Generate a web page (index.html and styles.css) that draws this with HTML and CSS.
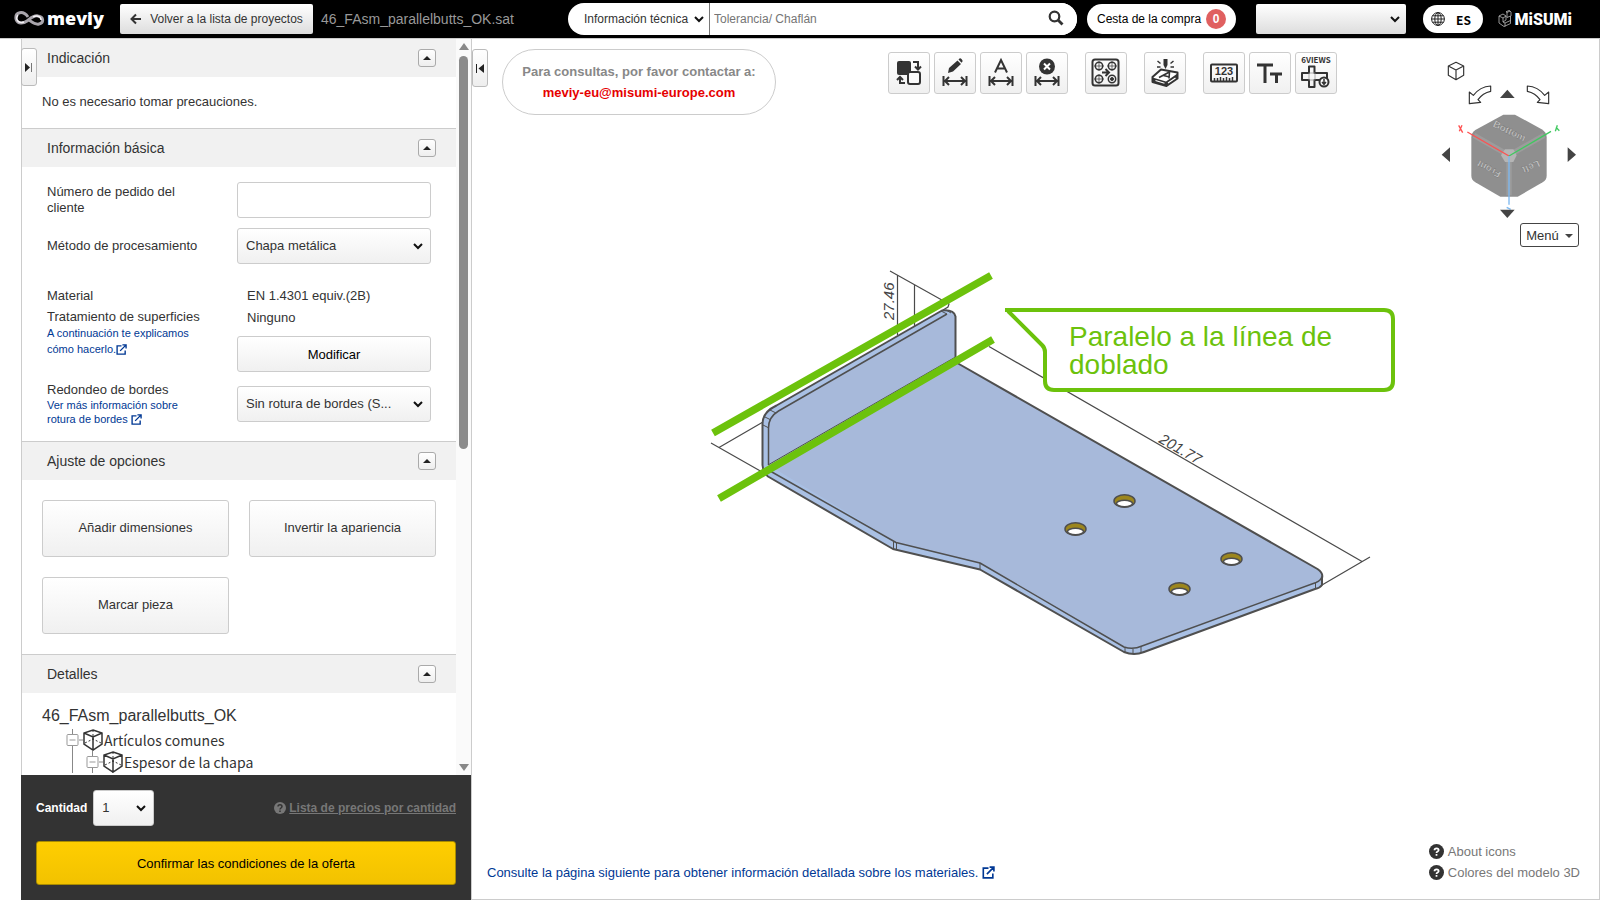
FILE: index.html
```html
<!DOCTYPE html>
<html lang="es">
  <head>
    <meta charset="utf-8" />
    <title>meviy</title>
    <meta name="viewport" content="width=device-width, initial-scale=1" />
    <link rel="stylesheet" href="styles.css">
  </head>

  <body>
    <header class="header">
      <a href="#" class="logo">
        <svg width="31" height="18" viewBox="0 0 31 18" fill="none">
          <path d="M14 7C9 0 1 2 2 9c1 5 7 5 11 2 4-3 7-6 11-5 6 1 6 7 1 8-4 1-7-2-10-4" stroke="#a9a5ac" stroke-width="3" />
          <path d="M4 5c-3 4 0 9 6 7M19 7c3-2 8-1 8 3" stroke="#f5f3f6" stroke-width="1.500" />
        </svg>
        <span>meviy</span>
      </a>
      <button type="button" class="back">
        <svg width="12" height="12" viewBox="0 0 12 12" fill="none" stroke="#333" stroke-width="2">
          <path d="M11 6H2M6 1.500L1.500 6L6 10.500" />
        </svg>
        Volver a la lista de proyectos
      </button>
      <span class="filename">46_FAsm_parallelbutts_OK.sat</span>
      <form class="search">
        <select class="search-type" aria-label="Tipo">
          <option>Información técnica</option>
        </select>
        <input type="text" class="search-text" placeholder="Tolerancia/ Chaflán" aria-label="Buscar" />
        <button type="button" class="search-btn" aria-label="Buscar">
          <svg width="16" height="16" viewBox="0 0 16 16" fill="none" stroke="#333">
            <circle cx="6.500" cy="6.500" r="4.800" stroke-width="2.200" />
            <path d="M10 10l4.500 4.500" stroke-width="2.800" />
          </svg>
        </button>
      </form>
      <a href="#" class="cart">Cesta de la compra <span class="badge">0</span></a>
      <select class="user" aria-label="Usuario">
        <option></option>
      </select>
      <button type="button" class="lang">
        <svg width="14" height="14" viewBox="0 0 14 14" fill="none" stroke="#222">
          <circle cx="7" cy="7" r="6.400" />
          <ellipse cx="7" cy="7" rx="3.200" ry="6.400" />
          <path d="M7 .5v13M.5 7h13M1.500 3.800h11M1.500 10.200h11" />
        </svg>
        ES
      </button>
      <a href="#" class="misumi">
        <svg width="14" height="18" viewBox="0 0 14 18" fill="none" stroke="#bbb" stroke-width="0.8">
          <path d="M1 6l4-2 3 2-3 2zM1 6v7l5 3.500 6.500-3V6L9 7.500V2.500L12 1l1 1v4M5 8v4l2 1 5.500-2.500M7 13v3.500M8 6v4L5 12M9 2.500l-1-.7L11 .5l1 .5" />
        </svg>
        <span>MiSUMi</span>
      </a>
    </header>

    <div class="main">
      <div class="sidebar">
        <button type="button" class="handle handle-left" aria-label="Abrir">
          <svg width="8" height="9" viewBox="0 0 8 9"><path d="M0 0l5 4.500L0 9z" fill="#222" /><path d="M6.500 0v9" stroke="#777" /></svg>
        </button>
        <div class="scroll">
          <div class="panels">
            <section>
              <h2 class="panel-title">Indicación <button type="button" class="toggle" aria-label="Plegar"></button></h2>
              <div class="notice">No es necesario tomar precauciones.</div>
            </section>
            <section>
              <h2 class="panel-title">Información básica <button type="button" class="toggle" aria-label="Plegar"></button></h2>
              <div class="basic">
                <div class="row">
                  <label for="order" class="label">Número de pedido del<br />cliente</label>
                  <input type="text" id="order" class="control" />
                </div>
                <div class="row">
                  <label for="method" class="label">Método de procesamiento</label>
                  <select id="method" class="control">
                    <option>Chapa metálica</option>
                  </select>
                </div>
                <div class="row material">
                  <div class="label">
                    Material<br />
                    Tratamiento de superficies
                    <a href="#">A continuación te explicamos<br />cómo hacerlo.<svg class="ext" viewBox="0 0 12 12"><path d="M6 2H1.200v9H10V7M4.500 7.500L10.500 1.500M7 1h4v4" /></svg></a>
                  </div>
                  <div class="value">
                    <span>EN 1.4301 equiv.(2B)</span>
                    <span>Ninguno</span>
                    <button type="button" class="control modify">Modificar</button>
                  </div>
                </div>
                <div class="row edges">
                  <div class="label">
                    <label for="edge">Redondeo de bordes</label>
                    <a href="#">Ver más información sobre<br />rotura de bordes <svg class="ext" viewBox="0 0 12 12"><path d="M6 2H1.200v9H10V7M4.500 7.500L10.500 1.500M7 1h4v4" /></svg></a>
                  </div>
                  <select id="edge" class="control">
                    <option>Sin rotura de bordes (S...</option>
                  </select>
                </div>
              </div>
            </section>
            <section>
              <h2 class="panel-title">Ajuste de opciones <button type="button" class="toggle" aria-label="Plegar"></button></h2>
              <div class="options">
                <button type="button">Añadir dimensiones</button>
                <button type="button">Invertir la apariencia</button>
                <button type="button">Marcar pieza</button>
              </div>
            </section>
            <section>
              <h2 class="panel-title">Detalles <button type="button" class="toggle" aria-label="Plegar"></button></h2>
              <div class="details">
                <div class="part-name">46_FAsm_parallelbutts_OK</div>
                <div class="tree-row">
                  <svg width="37" height="22" viewBox="0 0 37 22" fill="none">
                    <path d="M6.500 0v5M6.500 17v5M13 11h4" stroke="#888" />
                    <rect x="1" y="5.500" width="11" height="11" rx="1" stroke="#999" />
                    <path d="M3.500 11h6" stroke="#999" />
                    <path d="M27 1l9 3v11l-9 6-9-6V4zM18 4l9 4 9-4M27 8v13" stroke="#333" stroke-width="1.500" />
                    <path d="M27 1v12M19 14l8-4 8 4" stroke="#333" stroke-dasharray="2 2" />
                  </svg>
                  Artículos comunes
                </div>
                <div class="tree-row">
                  <svg width="57" height="22" viewBox="0 0 57 22" fill="none">
                    <path d="M6.500 0v22M26.500 0v5M26.500 17v5M33 11h4" stroke="#888" />
                    <rect x="21" y="5.500" width="11" height="11" rx="1" stroke="#999" />
                    <path d="M23.500 11h6M46.500 20v2" stroke="#999" />
                    <path d="M47 1l9 3v11l-9 6-9-6V4zM38 4l9 4 9-4M47 8v13" stroke="#333" stroke-width="1.500" />
                    <path d="M47 1v12M39 14l8-4 8 4" stroke="#333" stroke-dasharray="2 2" />
                  </svg>
                  Espesor de la chapa
                </div>
              </div>
            </section>
          </div>
          <div class="scrollbar">
            <div class="arrow-up"></div>
            <div class="thumb"></div>
            <div class="arrow-down"></div>
          </div>
        </div>
        <div class="order">
          <div class="order-row">
            <label for="qty">Cantidad</label>
            <select id="qty" class="control qty">
              <option>1</option>
            </select>
            <a href="#" class="price-list">
              <svg width="12" height="12" viewBox="0 0 12 12"><circle cx="6" cy="6" r="6" fill="#777" /><path d="M4 4.600c0-2.600 4-2.600 4 0C8 6 6 6 6 7.500M6 8.600v1.400" fill="none" stroke="#333" stroke-width="1.500" /></svg>
              <span>Lista de precios por cantidad</span>
            </a>
          </div>
          <button type="button" class="confirm">Confirmar las condiciones de la oferta</button>
        </div>
      </div>

      <div class="viewer">
        <svg class="model" viewBox="471 38 1127 860" fill="none">
          <!-- dimension lines -->
          <g stroke="#4a4a4a" stroke-width="1.200">
            <path d="M988 345.500L1361 560.500M1321 584L1369 556" />
            <path d="M710 442L762 471.500M718 446.500L762 421" />
            <path d="M889 270L948 303l-1 3-5 3M896.500 274.500V334M913.500 284V325" />
          </g>
          <text class="dim" transform="translate(893 319) rotate(-90)">27.46</text>
          <text class="dim" transform="translate(1157 441) rotate(30)">201.77</text>

          <!-- sheet -->
          <path d="M761.500 464V423q0-12 14-18.500L941 309.500q12-1 13.500 6V361l362 207q6 4 4.500 9v7q-2 3-7 4L1143 651q-10 4-20 0L979 568.500 892 548 767 475.500q-5-4-5.500-11.500z" fill="#a9c0e4" />
          <path d="M767.500 464V427q0-11 10-17L946 313q8-1 8.500 6v42l362 207q8 6 0 12L1141 645q-9 4-18 1L979 562 895 541z" fill="#a7b9da" />
          <g stroke="#4f4f4f" stroke-width="2" stroke-linejoin="round">
            <path d="M761.500 464V423q0-12 14-18.500L941 309.500q12-1 13.500 6V361l362 207q6 4 4.500 9v7q-2 3-7 4L1143 651q-10 4-20 0L979 568.500 892 548 767 475.500q-5-4-5.500-11.500z" />
            <path d="M767.500 464V427q0-11 10-17L946 313M770 470.500L895 541.500 979 562l144 84q9 3 18-1l174-63.500q5-2 6-6" stroke-width="1.500" />
            <path d="M892.500 540v8M895.500 541.500v7M979 562v7M1124 646v5M1132 648v5M1140 646v5M1314.500 582v6M762 424l6 3M764 416l6 3M769 409l6 3M940 310l6 3M945 309l5 3" stroke-width="1" />
            <path d="M767 464L954.500 356" stroke-width="1" />
          </g>

          <!-- holes -->
          <g stroke="#4f4f4f" stroke-width="1.500">
            <g fill="#9c861d">
              <ellipse cx="1123.500" cy="500" rx="10.500" ry="6.200" />
              <ellipse cx="1074.500" cy="528" rx="10.500" ry="6.200" />
              <ellipse cx="1230.500" cy="558" rx="10.500" ry="6.200" />
              <ellipse cx="1178.500" cy="588" rx="10.500" ry="6.200" />
            </g>
            <g fill="#fff">
              <ellipse cx="1123.500" cy="502.500" rx="8" ry="3.200" />
              <ellipse cx="1074.500" cy="530.500" rx="8" ry="3.200" />
              <ellipse cx="1230.500" cy="560.500" rx="8" ry="3.200" />
              <ellipse cx="1178.500" cy="590.500" rx="8" ry="3.200" />
            </g>
          </g>

          <!-- parallel marks and callout -->
          <g stroke="#6cc20c">
            <path d="M712 432L990 274.500M718 497.500L992 338.500" stroke-width="7.500" />
            <path d="M1004 309H1383q9 0 9 9V380q0 9-9 9H1053q-9 0-9-9V351q0-4-3-7L1007 310" fill="#fff" stroke-width="4" />
          </g>
          <text class="callout" x="1068" y="345">Paralelo a la línea de<tspan x="1068" y="373">doblado</tspan></text>
        </svg>

        <div class="viewer-top">
          <button type="button" class="handle handle-right" aria-label="Cerrar">
            <svg width="8" height="9" viewBox="0 0 8 9"><path d="M8 0L2.500 4.500 8 9z" fill="#222" /><path d="M.5 0v9" stroke="#222" /></svg>
          </button>
          <div class="contact">
            Para consultas, por favor contactar a:
            <a href="#">meviy-eu@misumi-europe.com</a>
          </div>
          <div class="toolbar">
            <div class="tools">
              <button type="button" aria-label="Invertir">
                <svg viewBox="0 0 40 40"><rect x="8" y="8" width="14" height="14" rx="2" fill="#333" /><rect x="19" y="19" width="12" height="12" rx="2" fill="#fafafa" stroke="#333" stroke-width="2" /><path d="M24 9h5v7M26 13.500l3 3 3-3M16 30h-5v-6M8 27l3-3 3 3" stroke="#333" stroke-width="2" fill="none" /></svg>
              </button>
              <button type="button" aria-label="Editar dimensiones">
                <svg viewBox="0 0 40 40"><path d="M13 20l1-5L22.500 7.500l3.500 3.500L18 18.500zM23.500 6.500l1-1q1-.5 2 .5l1 1.500q.5 1-1 2.200z" fill="#333" /><path class="arrows" d="M8.500 23v10M31.500 23v10M10 28h20M14 24l-4 4 4 4M26 24l4 4-4 4" /></svg>
              </button>
              <button type="button" aria-label="Texto de dimensiones">
                <svg viewBox="0 0 40 40"><path d="M14 19.500L20 7l6 12.500M16 15.500h8" stroke="#333" stroke-width="2" fill="none" /><path class="arrows" d="M8.500 23v10M31.500 23v10M10 28h20M14 24l-4 4 4 4M26 24l4 4-4 4" /></svg>
              </button>
              <button type="button" aria-label="Borrar dimensiones">
                <svg viewBox="0 0 40 40"><circle cx="20" cy="13.500" r="8" fill="#333" /><path d="M17 10.500l6 6M23 10.500l-6 6" stroke="#fff" stroke-width="2" /><path class="arrows" d="M8.500 23v10M31.500 23v10M10 28h20M14 24l-4 4 4 4M26 24l4 4-4 4" /></svg>
              </button>
            </div>
            <div class="tools">
              <button type="button" aria-label="Agujeros">
                <svg viewBox="0 0 40 40" fill="none" stroke="#333"><rect x="6.500" y="6.500" width="26" height="26" rx="2.500" stroke-width="2" /><g stroke-width="1.500"><circle cx="13" cy="13" r="3.700" /><circle cx="26" cy="13" r="3.700" /><circle cx="13" cy="26" r="3.700" /><circle cx="26" cy="26" r="3.700" /></g><path d="M13 8v10M8 13h10M26 8v10M21 13h10M13 21v10M8 26h10" stroke-width=".7" /><circle cx="26" cy="26" r="1.500" fill="#333" /><path d="M16 19.500h6M19.500 16l3.500 3.500-3.500 3.500" stroke-width="2" /></svg>
              </button>
            </div>
            <div class="tools">
              <button type="button" aria-label="Grabado">
                <svg viewBox="0 0 40 40"><path d="M7.500 24L16 16.500l16.500 3v6L21.500 33 7.500 29z" fill="#fff" stroke="#333" stroke-width="2" stroke-linejoin="round" /><path d="M7.500 24.500L21 28.500l11.500-8v5L21 33 7.500 29z" fill="#333" /><path d="M10.500 27.500l9 2.700M23 30l7.500-5" stroke="#fff" stroke-width="1.200" fill="none" /><path d="M14 24.500l10.500-5.500-.5 6.500M18.500 22.500l5 1.200" stroke="#333" stroke-width="1.600" fill="none" /><path d="M18.500 6h4v6l-2 4-2-4z" fill="#333" /><path d="M12.500 8l3 2.500M12 14h3.500M28.500 8l-3 2.500M29 14h-3.500" stroke="#333" stroke-width="1.500" /></svg>
              </button>
            </div>
            <div class="tools">
              <button type="button" aria-label="Medir">
                <svg viewBox="0 0 40 40"><rect x="7" y="11.500" width="26" height="17" rx="1" fill="none" stroke="#333" stroke-width="2" /><path d="M10.500 28v-3M13.500 28v-3M16.500 28v-4M19.500 28v-3M22.500 28v-4M25.500 28v-3M28.500 28v-4" stroke="#333" stroke-width="1.500" /><text class="digits" x="20" y="22">123</text></svg>
              </button>
              <button type="button" aria-label="Tamaño de texto">
                <svg viewBox="0 0 40 40"><path d="M7 12h16M15 12v18M20 21h12M26.500 21v9" stroke="#333" stroke-width="3" /></svg>
              </button>
              <button type="button" aria-label="6 vistas">
                <svg viewBox="0 0 40 40"><text class="views" x="20" y="10">6VIEWS</text><path d="M13 13.500h5.500V20H31v7H18.500v7H13v-7H6v-7h7z" fill="none" stroke="#333" stroke-width="2" stroke-linejoin="round" /><path d="M13 20h6v7h-6z" fill="none" stroke="#888" stroke-width=".7" /><circle cx="28" cy="29" r="4.500" fill="#fafafa" stroke="#333" stroke-width="2" /><path d="M28 26v5M26 29l2 2.300 2-2.300" stroke="#333" stroke-width="1.500" fill="none" /></svg>
              </button>
            </div>
          </div>
          <div class="nav">
            <svg class="nav-cube" viewBox="-3 -3 600 528">
              <g fill="none" stroke="#333" stroke-width="3.500" stroke-linejoin="round">
                <path d="M168 67l23 11v28l-23 13-23-13V78zM145 78l23 12 23-12M168 90v29" />
                <path d="M272 138q-32 2-52 28l-12-10v35l34-4-8-8q14-20 38-25zM382 138q32 2 52 28l12-10v35l-34-4 8-8q-14-20-38-25z" />
              </g>
              <path d="M322 149l22 25h-44zM125 344l25-22v44zM528 344l-25-22v44z" fill="#444" />
              <path d="M310 224h35l80 44q15 9 15 24v115q0 12-12 20l-75 43h-52l-75-43q-12-8-12-20V292q0-14 12-22z" fill="#8f8f8f" />
              <path d="M222 286l105 60v120M432 286l-105 60" fill="none" stroke="#9c9c9c" stroke-width="16" />
              <path d="M303 346l12-18h25l10 18-10 20h-25z" fill="#b5b5b5" />
              <text class="face" transform="translate(277 259) rotate(26)">Bottom</text>
              <text class="face" transform="translate(305 396) rotate(208)">Front</text>
              <text class="face" transform="translate(414 360) rotate(156)">Left</text>
              <path d="M202 276l125 72" stroke="#ff5050" stroke-width="4" />
              <path d="M453 274l-126 74" stroke="#3fc95f" stroke-width="4" />
              <path d="M327 348v146M320 502l12 6" stroke="#7cb8f0" stroke-width="4" />
              <path d="M322 534l22-25h-44z" fill="#444" />
              <path d="M176 256l12 22M186 256l-8 18" stroke="#ff5050" stroke-width="4" />
              <path d="M466 274l6-18M478 272l-10-10" stroke="#3fc95f" stroke-width="4" />
            </svg>
            <button type="button" class="menu">Menú</button>
          </div>
        </div>

        <div class="viewer-bottom">
          <a href="#" class="materials">Consulte la página siguiente para obtener información detallada sobre los materiales. <svg class="ext" viewBox="0 0 12 12"><path d="M6 2H1.200v9H10V7M4.500 7.500L10.500 1.500M7 1h4v4" /></svg></a>
          <div class="help">
            <a href="#"><svg width="15" height="15" viewBox="0 0 12 12"><circle cx="6" cy="6" r="6" fill="#333" /><path d="M4.400 4.900c0-2 3.300-2 3.300 0C7.700 6 6 6 6 7.100M6 7.900v1.400" fill="none" stroke="#fff" stroke-width="1.400" /></svg>About icons</a>
            <a href="#"><svg width="15" height="15" viewBox="0 0 12 12"><circle cx="6" cy="6" r="6" fill="#333" /><path d="M4.400 4.900c0-2 3.300-2 3.300 0C7.700 6 6 6 6 7.100M6 7.900v1.400" fill="none" stroke="#fff" stroke-width="1.400" /></svg>Colores del modelo 3D</a>
          </div>
        </div>
      </div>
    </div>
  </body>
</html>
```
FILE: styles.css
```css
* {
  box-sizing: border-box;
}
body {
  margin: 0;
  height: 100vh;
  display: flex;
  flex-direction: column;
  overflow: hidden;
  font-family: "Liberation Sans", Arial, sans-serif;
  font-size: 13px;
  color: #333;
  background: #fff;
}
button,
select,
input {
  font-family: inherit;
  font-size: 13px;
  color: #333;
}
button {
  padding: 0;
}
a {
  color: #003894;
  text-decoration: none;
}
select {
  --chevron: url("data:image/svg+xml,%3Csvg xmlns='http://www.w3.org/2000/svg' width='10' height='7' fill='none' stroke='%23111' stroke-width='2'%3E%3Cpath d='M1 1l4 4 4-4'/%3E%3C/svg%3E");
  appearance: none;
}

/* header */
.header {
  display: flex;
  align-items: center;
  height: 38px;
  padding: 0 28px 0 14px;
  background: #000;
  font-size: 12px;
}
.logo {
  display: flex;
  align-items: center;
  gap: 2px;
  width: 106px;
  color: #fff;
  font: 800 18px "Open Sans", sans-serif;
}
.logo span {
  line-height: 30px;
  padding-bottom: 2px;
}
.back {
  display: flex;
  align-items: center;
  justify-content: center;
  gap: 8px;
  width: 193px;
  height: 30px;
  border: 0;
  border-radius: 2px;
  background: linear-gradient(#fff, #ddd);
  font-size: 12px;
}
.filename {
  margin-left: 8px;
  color: #999;
  font-size: 14px;
}
.search {
  display: flex;
  flex: 1;
  max-width: 509px;
  height: 32px;
  margin-left: 54px;
  border-radius: 16px;
  background: #fff;
  overflow: hidden;
}
.search-type {
  width: 142px;
  padding-left: 16px;
  border: 0;
  border-right: 1px solid #777;
  background: var(--chevron) no-repeat right 5px center;
  font-size: 12px;
}
.search-text {
  flex: 1;
  padding: 0 4px;
  border: 0;
  font-size: 12px;
}
.search-btn {
  width: 42px;
  border: 0;
  background: #fff;
}
.cart {
  display: flex;
  align-items: center;
  gap: 5px;
  height: 30px;
  margin-left: 10px;
  padding: 0 10px;
  border-radius: 15px;
  background: #fff;
  color: #000;
}
.badge {
  width: 20px;
  border-radius: 10px;
  background: #e06060;
  color: #fff;
  font-weight: bold;
  line-height: 20px;
  text-align: center;
}
.user {
  width: 150px;
  height: 30px;
  margin-left: 20px;
  border: 0;
  border-radius: 2px;
  background: var(--chevron) no-repeat right 6px center, linear-gradient(#fff, #ddd);
}
.lang {
  display: flex;
  align-items: center;
  gap: 11px;
  height: 28px;
  margin-left: 17px;
  padding: 0 12px 0 8px;
  border: 0;
  border-radius: 14px;
  background: #fff;
  color: #000;
  font: bold 12px "Noto Sans CJK JP", sans-serif;
}
.misumi {
  display: flex;
  align-items: center;
  gap: 3px;
  margin-left: auto;
  color: #fff;
  font: 900 16px Roboto, sans-serif;
}

/* layout */
.main {
  display: flex;
  flex: 1;
  min-height: 0;
  border-top: 1px solid #ccc;
}
.sidebar {
  position: relative;
  display: flex;
  flex-direction: column;
  width: 451px;
  margin-left: 21px;
  border-left: 1px solid #ccc;
  border-right: 1px solid #ccc;
}
.scroll {
  display: flex;
  flex: 1;
  min-height: 0;
}
.panels {
  flex: 1;
  overflow: hidden;
}
.scrollbar {
  display: flex;
  flex-direction: column;
  align-items: center;
  width: 15px;
  padding: 4px 0;
  background: #fafafa;
}
.arrow-up,
.arrow-down {
  border: 5px solid transparent;
}
.arrow-up {
  border-top: 0;
  border-bottom: 7px solid #888;
}
.arrow-down {
  margin-top: auto;
  border-bottom: 0;
  border-top: 7px solid #888;
}
.thumb {
  width: 9px;
  height: 54%;
  margin-top: 6px;
  border-radius: 5px;
  background: #8b8b8b;
}
.handle {
  position: absolute;
  width: 16px;
  height: 38px;
  border: 1px solid #bbb;
  border-radius: 3px;
  background: linear-gradient(#fff, #eee);
}
.handle-left {
  left: -1px;
  top: 9px;
}
.handle-right {
  left: 0;
  top: 10px;
}

/* panels */
.panel-title {
  display: flex;
  align-items: center;
  justify-content: space-between;
  height: 39px;
  margin: 0;
  padding: 0 20px 0 25px;
  border-top: 1px solid #ccc;
  background: #f1f1f1;
  font-size: 14px;
  font-weight: normal;
}
section:first-child .panel-title {
  height: 38px;
  border-top: 0;
}
.toggle {
  width: 18px;
  height: 18px;
  border: 1px solid #aaa;
  border-radius: 3px;
  background: linear-gradient(#fff, #eee);
}
.toggle::before {
  content: "";
  display: block;
  width: 0;
  margin: 0 auto;
  border: 4px solid transparent;
  border-top: 0;
  border-bottom-color: #222;
}
.notice {
  padding: 15px 20px 17px;
  line-height: 19px;
}
.basic {
  display: flex;
  flex-direction: column;
  gap: 10px;
  padding: 15px 25px;
}
.row {
  display: flex;
  align-items: center;
  justify-content: space-between;
  line-height: 16px;
}
.label a {
  display: block;
  font-size: 11px;
}
.control {
  width: 194px;
  height: 36px;
  padding: 0 8px 2px;
  border: 1px solid #ccc;
  border-radius: 3px;
  background: linear-gradient(#fff, #f0f0f0);
}
select.control {
  background: var(--chevron) no-repeat right 7px center, linear-gradient(#fff, #f0f0f0);
}
input.control {
  background: #fff;
}
.material {
  align-items: flex-start;
  margin-top: 11px;
  line-height: 21px;
}
.material a {
  margin-top: -2px;
  line-height: 16px;
}
.value span {
  display: block;
  padding-left: 10px;
  line-height: 22px;
}
.value .modify {
  display: block;
  margin-top: 7px;
  padding: 0;
  color: #000;
}
.edges a {
  line-height: 14px;
}
.ext {
  width: 11px;
  height: 11px;
  vertical-align: -2px;
  fill: none;
  stroke: #003894;
  stroke-width: 1.5;
}
.options {
  display: grid;
  grid-template-columns: 1fr 1fr;
  gap: 20px;
  padding: 20px;
}
.options button {
  height: 57px;
  padding-bottom: 2px;
  border: 1px solid #ccc;
  border-radius: 3px;
  background: linear-gradient(#fff, #f0f0f0);
}
.details {
  padding: 13px 20px;
}
.part-name {
  font-size: 16px;
  line-height: 20px;
  margin-bottom: 3px;
}
.tree-row {
  display: flex;
  align-items: center;
  gap: 1px;
  height: 22px;
  padding-left: 24px;
  font: 14px "Noto Sans CJK JP", sans-serif;
}

/* order box */
.order {
  margin: 0 0 0 -1px;
  padding: 15px;
  background: #333;
}
.order-row {
  display: flex;
  align-items: center;
  gap: 6px;
  margin-bottom: 15px;
  color: #fff;
}
.order-row label {
  font-weight: bold;
  font-size: 12px;
}
.qty {
  width: 61px;
}
.price-list {
  display: flex;
  align-items: center;
  gap: 3px;
  margin-left: auto;
  color: #777;
  font-weight: bold;
  font-size: 12px;
}
.price-list span {
  text-decoration: underline;
}
.confirm {
  width: 100%;
  height: 44px;
  border: 1px solid #a98c00;
  border-radius: 3px;
  background: linear-gradient(#ffce00, #f2c200);
  color: #000;
}

/* viewer */
.viewer {
  position: relative;
  display: flex;
  flex: 1;
  flex-direction: column;
  justify-content: space-between;
  border-right: 1px solid #ccc;
  border-bottom: 1px solid #ccc;
}
.model {
  position: absolute;
  left: 0;
  top: 0;
  width: 100%;
  height: 100%;
}
.dim {
  fill: #444;
  font-size: 15px;
  font-style: italic;
}
.callout {
  fill: #6cc20c;
  font-size: 28px;
}
.viewer-top {
  position: relative;
  display: flex;
  align-items: flex-start;
}
.contact {
  width: 274px;
  margin: 10px 0 0 30px;
  padding: 11px 0;
  border: 1px solid #ccc;
  border-radius: 33px;
  background: #fff;
  color: #888;
  font-weight: bold;
  line-height: 21px;
  text-align: center;
}
.contact a {
  display: block;
  color: #e60000;
}
.toolbar {
  display: flex;
  gap: 17px;
  margin: 13px 62px 0 auto;
}
.tools {
  display: flex;
  gap: 4px;
}
.tools button {
  width: 42px;
  height: 42px;
  border: 1px solid #ccc;
  border-radius: 3px;
  background: linear-gradient(#fff, #f0f0f0);
}
.tools svg {
  display: block;
  width: 40px;
  height: 40px;
}
.arrows {
  fill: none;
  stroke: #333;
  stroke-width: 2;
}
.digits {
  font-size: 11px;
  font-weight: bold;
  fill: #333;
  text-anchor: middle;
}
.views {
  font: bold 8px "Noto Sans CJK JP", sans-serif;
  fill: #333;
  text-anchor: middle;
}
.nav {
  display: flex;
  flex-direction: column;
  width: 200px;
}
.nav-cube {
  width: 200px;
  height: 176px;
  overflow: visible;
}
.face {
  fill: #ccc;
  font-size: 30px;
  font-weight: bold;
  stroke: #666;
  stroke-width: 1;
}
.menu {
  align-self: flex-end;
  width: 59px;
  height: 24px;
  margin: 8px 20px 0 0;
  border: 1px solid #444;
  border-radius: 3px;
  background: #fff;
}
.menu::after {
  content: "";
  display: inline-block;
  margin-left: 6px;
  border: 4px solid transparent;
  border-bottom: 0;
  border-top-color: #444;
  vertical-align: 2px;
}
.viewer-bottom {
  position: relative;
  display: flex;
  align-items: flex-end;
  justify-content: space-between;
  padding: 0 19px 16px 15px;
}
.materials {
  line-height: 21px;
}
.materials .ext {
  width: 13px;
  height: 13px;
}
.help a {
  display: flex;
  align-items: center;
  gap: 4px;
  line-height: 21px;
  color: #777;
}
```
